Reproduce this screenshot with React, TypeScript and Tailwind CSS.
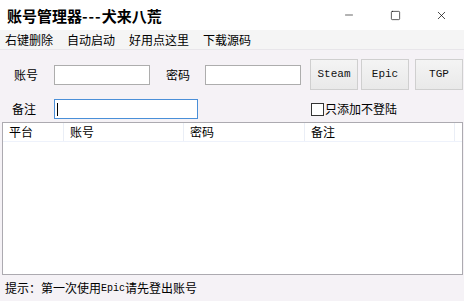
import { Minus, Square, X } from 'lucide-react';

const cjk = '"Noto Sans CJK SC", "Noto Sans", sans-serif';
const mono = '"Liberation Mono", "Noto Sans CJK SC", monospace';

function TitleBar() {
  return (
    <div className="flex h-[30px] items-center bg-white">
      <div className="pl-[7px] text-[15px] font-bold leading-none text-black">
        账号管理器<span className="tracking-[1px]">---</span>犬来八荒
      </div>
      <div className="ml-auto flex h-full items-center">
        <div className="flex w-[46px] items-center justify-center">
          <Minus size={12} strokeWidth={1.2} className="text-black" />
        </div>
        <div className="flex w-[46px] items-center justify-center">
          <Square size={11} strokeWidth={1.4} className="text-black" />
        </div>
        <div className="flex w-[46px] items-center justify-center">
          <X size={13} strokeWidth={1.3} className="text-black" />
        </div>
      </div>
    </div>
  );
}

function MenuBar() {
  const items = ['右键删除', '自动启动', '好用点这里', '下载源码'];
  return (
    <div className="flex h-[20px] items-center gap-[14px] border-b border-[#e8e6ea] bg-[#f5f5f5] pl-[5px] text-[12px] text-black">
      {items.map((item) => (
        <span key={item}>{item}</span>
      ))}
    </div>
  );
}

function GameButton({ label }: { label: string }) {
  return (
    <button
      className="flex h-[31px] w-[48px] items-center justify-center border border-[#cfcfcf] bg-gradient-to-b from-[#f4f4f4] to-[#e9e9e9] text-[11px] text-[#111]"
      style={{ fontFamily: mono }}
    >
      {label}
    </button>
  );
}

export default function App() {
  const cols = [
    { name: '平台', w: 'w-[61px]' },
    { name: '账号', w: 'w-[120px]' },
    { name: '密码', w: 'w-[121px]' },
    { name: '备注', w: 'w-[150px]' },
  ];

  return (
    <div className="flex h-[301px] w-[464px] flex-col overflow-hidden bg-[#f5f2f6]" style={{ fontFamily: cjk }}>
      <TitleBar />
      <MenuBar />

      {/* Row 1 */}
      <div className="mt-[9px] flex h-[31px] items-center text-[12px] text-black">
        <span className="ml-[14px] w-[40px]">账号</span>
        <div className="h-[20px] w-[96px] border border-[#adadad] bg-white" />
        <span className="ml-[16px] w-[39px]">密码</span>
        <div className="h-[20px] w-[96px] border border-[#adadad] bg-white" />
        <div className="ml-[9px] flex gap-[3px]">
          <GameButton label="Steam" />
          <GameButton label="Epic" />
          <div className="ml-[3px]">
            <GameButton label="TGP" />
          </div>
        </div>
      </div>

      {/* Row 2 */}
      <div className="mt-[9px] flex h-[20px] items-center text-[12px] text-black">
        <span className="ml-[12px] w-[42px]">备注</span>
        <div className="flex h-[20px] w-[144px] items-center border border-[#4a8fd8] bg-white pl-[2px]">
          <div className="h-[13px] w-px bg-black" />
        </div>
        <div className="ml-[113px] flex items-center">
          <div className="h-[13px] w-[13px] border border-[#333] bg-white" />
          <span className="ml-px text-[12px]">只添加不登陆</span>
        </div>
      </div>

      {/* List */}
      <div className="ml-[2px] mt-[3px] h-[153px] w-[461px] border border-[#acaab0] bg-white">
        <div className="flex h-[19px] border-b border-[#eef2fb] text-[12px] text-black">
          {cols.map((c) => (
            <div key={c.name} className={`${c.w} flex items-center border-r border-[#eaeef6] pl-[6px]`}>
              {c.name}
            </div>
          ))}
        </div>
      </div>

      {/* Status */}
      <div className="flex flex-1 items-center pl-[5px] text-[12px] text-black">
        <span>提示：第一次使用</span>
        <span className="text-[10px]" style={{ fontFamily: mono }}>Epic</span>
        <span>请先登出账号</span>
      </div>
    </div>
  );
}
